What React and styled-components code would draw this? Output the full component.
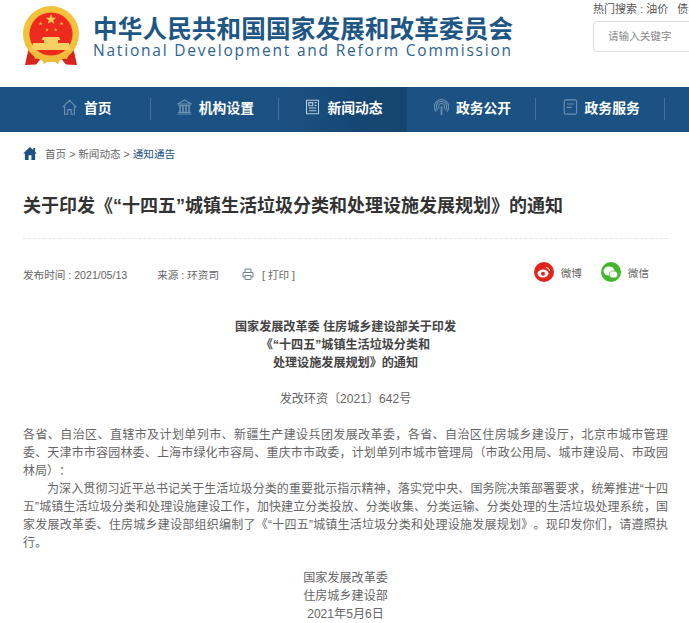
import React from "react";
import styled, { createGlobalStyle } from "styled-components";

const GlobalStyle = createGlobalStyle`
  html, body {
    margin: 0;
    padding: 0;
    background: #fff;
    overflow: hidden;
  }
  body {
    font-family: "Liberation Sans", "Noto Sans CJK SC", sans-serif;
    color: #666;
  }
`;

const NAV_ITEMS = [
  { label: "首页", icon: "home" },
  { label: "机构设置", icon: "bank" },
  { label: "新闻动态", icon: "news", active: true },
  { label: "政务公开", icon: "tower" },
  { label: "政务服务", icon: "book" },
];

// the body copy breaks at these exact places in the page
const BODY_LINES = [
  { text: "各省、自治区、直辖市及计划单列市、新疆生产建设兵团发展改革委，各省、自治区住房城乡建设厅，北京市城市管理" },
  { text: "委、天津市市容园林委、上海市绿化市容局、重庆市市政委，计划单列市城市管理局（市政公用局、城市建设局、市政园" },
  { text: "林局）：", short: true },
  { text: "为深入贯彻习近平总书记关于生活垃圾分类的重要批示指示精神，落实党中央、国务院决策部署要求，统筹推进“十四", indent: true },
  { text: "五”城镇生活垃圾分类和处理设施建设工作，加快建立分类投放、分类收集、分类运输、分类处理的生活垃圾处理系统，国" },
  { text: "家发展改革委、住房城乡建设部组织编制了《“十四五”城镇生活垃圾分类和处理设施发展规划》。现印发你们，请遵照执" },
  { text: "行。", short: true },
];

const NavIcon = ({ type }) => {
  const common = {
    width: 15,
    height: 16,
    viewBox: "0 0 15 16",
    fill: "none",
    stroke: "#6f90af",
    strokeWidth: 1.1,
  };
  if (type === "home") {
    return (
      <svg {...common}>
        <path d="M.6 8.4 7.5 1.4l6.9 7M2.6 7.2v8h3.2v-4.6h3.4v4.6h3.2V7.2" />
      </svg>
    );
  }
  if (type === "bank") {
    return (
      <svg {...common}>
        <path d="M.8 5 7.5 1l6.7 4zM1.5 6.6h12M.6 15h13.8M1.2 13.4h12.6" />
        <path d="M3 7v6M6 7v6M9 7v6M12 7v6" strokeWidth="1.6" />
      </svg>
    );
  }
  if (type === "news") {
    return (
      <svg {...common} stroke="#b9cadb">
        <path d="M1.5 1.2h12v13.6h-12zM3.8 3.6h4v3.2h-4zM9.6 3.6h2M9.6 6.4h2M3.8 9h7.6M3.8 11.8h7.6" />
      </svg>
    );
  }
  if (type === "tower") {
    return (
      <svg {...common}>
        <path d="M7.5 7.5V16" strokeWidth="1.8" />
        <path d="M5.4 9.6a3 3 0 1 1 4.2 0M3.8 11.2a5.2 5.2 0 1 1 7.4 0M2.2 12.6a7.2 7.2 0 1 1 10.6 0" />
      </svg>
    );
  }
  return (
    <svg {...common}>
      <path d="M2.6.9h9.6a1.4 1.4 0 0 1 1.4 1.4v11.4a1.4 1.4 0 0 1-1.4 1.4H2.6a1.4 1.4 0 0 1-1.4-1.4V2.3A1.4 1.4 0 0 1 2.6.9zM4 5h7M4 8.4h4.6" />
    </svg>
  );
};

const Star = ({ x, y, r, fill }) => {
  const points = [];
  for (let i = 0; i < 10; i++) {
    const radius = i % 2 === 0 ? r : r * 0.42;
    const angle = (Math.PI / 5) * i - Math.PI / 2;
    points.push(`${x + radius * Math.cos(angle)},${y + radius * Math.sin(angle)}`);
  }
  return <polygon points={points.join(" ")} fill={fill} />;
};

const Emblem = () => (
  <svg width="60" height="62" viewBox="0 0 60 62">
    <path d="M7 42 3 60l11-.5 6-7h18l6 7 11 .5-4-18-9 8H16z" fill="#d9241b" />
    <circle cx="29" cy="29" r="28" fill="#f2c23c" />
    <circle cx="29" cy="29" r="21.6" fill="#ee2a1f" />
    <Star x={29} y={14.5} r={5.4} fill="#f6cf4c" />
    <Star x={18.6} y={18.6} r={2.1} fill="#f0b93a" />
    <Star x={39.6} y={18.6} r={2.1} fill="#f0b93a" />
    <Star x={25} y={25} r={1.9} fill="#f0b93a" />
    <Star x={33.7} y={25} r={1.9} fill="#f0b93a" />
    <path d="M21 32h16l1.5 3H36v3H22v-3h-2.5zM11 38h36l1.5 7h-39z" fill="#f6d062" />
    <path d="M10 46c6 4 12 5 19 5s13-1 19-5l-3 8-6-1-3 6-3-2h-8l-3 2-3-6-6 1z" fill="#efbb3a" />
  </svg>
);

const Page = styled.div`
  width: 689px;
  height: 623px;
  overflow: hidden;
`;

const Header = styled.header`
  display: flex;
  height: 87px;
`;

const LogoBlock = styled.div`
  display: flex;
  gap: 10px;
  padding: 5px 0 0 22px;
  width: 570px;
  box-sizing: border-box;
`;

const LogoText = styled.div`
  display: flex;
  flex-direction: column;
  padding: 8px 0 0 1px;
`;

const LogoCn = styled.div`
  font-family: "Noto Sans CJK SC", sans-serif;
  font-size: 24.6px;
  line-height: 29px;
  letter-spacing: 0.12px;
  font-weight: 700;
  color: #1e5686;
  white-space: nowrap;
`;

const LogoEn = styled.div`
  font-family: "Open Sans", sans-serif;
  font-size: 15.5px;
  line-height: 16px;
  letter-spacing: 1.79px;
  color: #2e6391;
  white-space: nowrap;
`;

const SearchBlock = styled.div`
  flex: 1;
  padding: 2px 0 0 23px;
  overflow: hidden;
`;

const HotWords = styled.div`
  font-size: 11px;
  line-height: 15px;
  color: #555;
  white-space: pre;
`;

const SearchBox = styled.div`
  width: 160px;
  height: 29px;
  margin-top: 4px;
  padding-left: 14px;
  border: 1px solid #ddd;
  border-radius: 4px;
  font-size: 10.6px;
  line-height: 28px;
  color: #888;
`;

const Nav = styled.nav`
  display: flex;
  align-items: center;
  height: 45px;
  padding-left: 22px;
  background: #1b5283;
`;

const NavItem = styled.div`
  flex: 0 0 127.6px;
  box-sizing: border-box;
  height: 45px;
  padding: 0 0 5px 2px;
  display: flex;
  align-items: center;
  justify-content: center;
  gap: 7px;
  font-size: 13.8px;
  font-weight: 700;
  color: #fff;
  background: ${(p) =>
    p.$active ? "linear-gradient(90deg, #1b5283, #154571 70%)" : "transparent"};
`;

const NavDivider = styled.span`
  flex: 0 0 1px;
  height: 22px;
  margin-bottom: 1px;
  background: ${(p) => (p.$hidden ? "transparent" : "#44729b")};
`;

const Content = styled.main`
  padding: 0 21px 0 23px;
`;

const Crumbs = styled.div`
  display: flex;
  align-items: center;
  gap: 8px;
  box-sizing: border-box;
  height: 44px;
  padding-bottom: 2px;
  font-size: 10.6px;
  color: #666;
  b {
    font-weight: 400;
    color: #1b5283;
  }
`;

const Title = styled.h1`
  margin: 0;
  padding: 17px 0 19px;
  font-size: 18px;
  line-height: 26px;
  font-weight: 700;
  color: #333;
  border-bottom: 1px dashed #e4e4e4;
`;

const MetaRow = styled.div`
  display: flex;
  align-items: center;
  height: 70px;
  font-size: 10.6px;
  color: #666;
`;

const MetaText = styled.span`
  margin-left: ${(p) => p.$left || 0}px;
  margin-right: ${(p) => p.$gap || 0}px;
`;

const ShareGroup = styled.div`
  display: flex;
  align-items: center;
  margin: -4px 19px 0 auto;
`;

const ShareBadge = styled.span`
  width: 20px;
  height: 20px;
  border-radius: 50%;
  margin-right: 7px;
  display: flex;
  align-items: center;
  justify-content: center;
  background: ${(p) => p.$color};
`;

const ShareLabel = styled.span`
  margin-right: ${(p) => p.$gap || 0}px;
`;

const Article = styled.article`
  padding-top: 9px;
  font-size: 12px;
  line-height: 18px;
  color: #666;
`;

const Centered = styled.p`
  margin: 0 0 18px;
  text-align: center;
  font-size: 12.1px;
  font-weight: ${(p) => (p.$bold ? 700 : 400)};
  color: ${(p) => (p.$bold ? "#444" : "#666")};
`;

const SignOff = styled(Centered)`
  margin-top: 17px;
`;

const BodyLine = styled.div`
  white-space: nowrap;
  text-spacing-trim: space-all;
  text-align-last: ${(p) => (p.$short ? "left" : "justify")};
  padding-left: ${(p) => (p.$indent ? "24px" : 0)};
`;

export default function App() {
  return (
    <Page>
      <GlobalStyle />
      <Header>
        <LogoBlock>
          <Emblem />
          <LogoText>
            <LogoCn>中华人民共和国国家发展和改革委员会</LogoCn>
            <LogoEn>National Development and Reform Commission</LogoEn>
          </LogoText>
        </LogoBlock>
        <SearchBlock>
          <HotWords>{"热门搜索 : 油价   债券"}</HotWords>
          <SearchBox>请输入关键字</SearchBox>
        </SearchBlock>
      </Header>

      <Nav>
        {NAV_ITEMS.map((item) => (
          <React.Fragment key={item.label}>
            <NavItem $active={item.active}>
              <NavIcon type={item.icon} />
              {item.label}
            </NavItem>
            <NavDivider $hidden={item.active} />
          </React.Fragment>
        ))}
      </Nav>

      <Content>
        <Crumbs>
          <svg width="14" height="13" viewBox="0 0 15 14">
            <path d="M7.5 0 0 7h2v7h4V9h3v5h4V7h2l-2-1.9V1h-2v2.2z" fill="#1b5283" />
          </svg>
          <span>
            首页 &gt; 新闻动态 &gt; <b>通知通告</b>
          </span>
        </Crumbs>

        <Title>关于印发《“十四五”城镇生活垃圾分类和处理设施发展规划》的通知</Title>

        <MetaRow>
          <MetaText $gap={30}>发布时间 : 2021/05/13</MetaText>
          <MetaText $gap={23}>来源 : 环资司</MetaText>
          <svg width="12" height="12" viewBox="0 0 12 12" fill="none" stroke="#6d8296">
            <path d="M3 4V1h6v3M1 4.5h10V9H9M3 9H1V4.5M3 7.5h6v4H3z" />
          </svg>
          <MetaText $left={8}>[ 打印 ]</MetaText>
          <ShareGroup>
            <ShareBadge $color="#e2231a">
              <svg width="14" height="12" viewBox="0 0 14 12">
                <ellipse cx="6" cy="7.5" rx="5.5" ry="4" fill="#fff" />
                <circle cx="6" cy="7.8" r="2" fill="#e2231a" />
                <path d="M9 1.5a3.5 3.5 0 0 1 3.5 3.5" stroke="#fff" fill="none" />
              </svg>
            </ShareBadge>
            <ShareLabel $gap={19}>微博</ShareLabel>
            <ShareBadge $color="#43b52f">
              <svg width="15" height="13" viewBox="0 0 15 13">
                <ellipse cx="6" cy="5" rx="5.5" ry="4.5" fill="#fff" />
                <ellipse cx="10.5" cy="8.5" rx="4.2" ry="3.5" fill="#fff" stroke="#43b52f" strokeWidth=".7" />
              </svg>
            </ShareBadge>
            <ShareLabel>微信</ShareLabel>
          </ShareGroup>
        </MetaRow>

        <Article>
          <Centered $bold>
            国家发展改革委 住房城乡建设部关于印发
            <br />
            《“十四五”城镇生活垃圾分类和
            <br />
            处理设施发展规划》的通知
          </Centered>
          <Centered>发改环资〔2021〕642号</Centered>
          {BODY_LINES.map((line) => (
            <BodyLine key={line.text} $short={line.short} $indent={line.indent}>
              {line.text}
            </BodyLine>
          ))}
          <SignOff>
            国家发展改革委
            <br />
            住房城乡建设部
            <br />
            2021年5月6日
          </SignOff>
        </Article>
      </Content>
    </Page>
  );
}
